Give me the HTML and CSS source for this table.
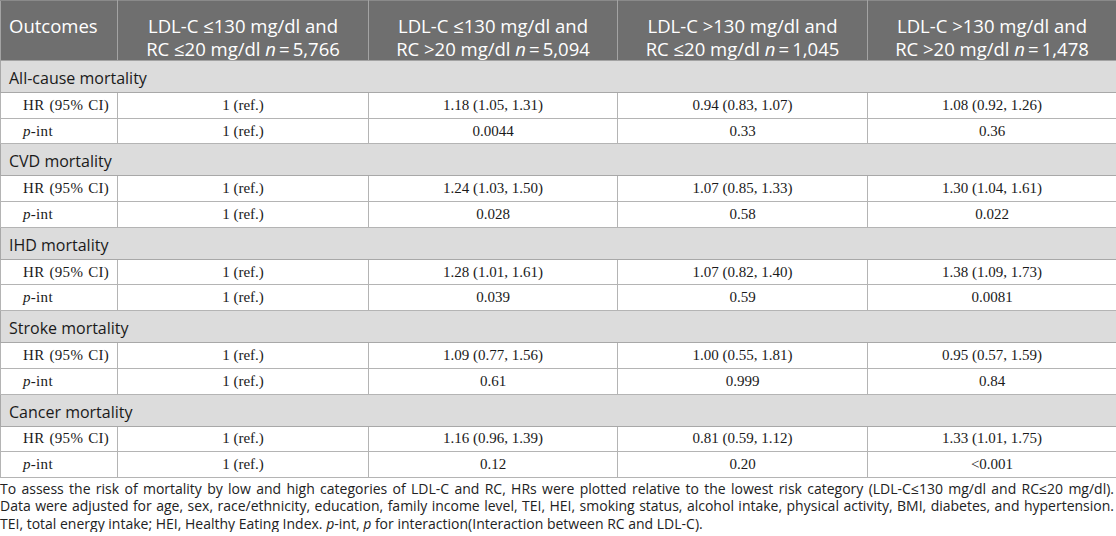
FILE: index.html
```html
<!DOCTYPE html>
<html>
<head>
<meta charset="utf-8">
<link rel="stylesheet" href="styles.css">
</head>
<body>
<div class="wrap">
<table class="tbl">
  <colgroup>
    <col class="c0"><col class="c1"><col class="c2"><col class="c3"><col class="c4">
  </colgroup>
  <thead>
    <tr>
      <th class="first">Outcomes</th>
      <th>LDL-C ≤130 mg/dl and<br>RC ≤20 mg/dl <i>n</i>&thinsp;=&thinsp;5,766</th>
      <th>LDL-C ≤130 mg/dl and<br>RC &gt;20 mg/dl <i>n</i>&thinsp;=&thinsp;5,094</th>
      <th>LDL-C &gt;130 mg/dl and<br>RC ≤20 mg/dl <i>n</i>&thinsp;=&thinsp;1,045</th>
      <th>LDL-C &gt;130 mg/dl and<br>RC &gt;20 mg/dl <i>n</i>&thinsp;=&thinsp;1,478</th>
    </tr>
  </thead>
  <tbody>
    <tr class="sec"><td colspan="5">All-cause mortality</td></tr>
    <tr class="row"><td class="lbl">HR (95% CI)</td><td>1 (ref.)</td><td>1.18 (1.05, 1.31)</td><td>0.94 (0.83, 1.07)</td><td>1.08 (0.92, 1.26)</td></tr>
    <tr class="row"><td class="lbl"><i>p</i>-int</td><td>1 (ref.)</td><td>0.0044</td><td>0.33</td><td>0.36</td></tr>
    <tr class="sec"><td colspan="5">CVD mortality</td></tr>
    <tr class="row"><td class="lbl">HR (95% CI)</td><td>1 (ref.)</td><td>1.24 (1.03, 1.50)</td><td>1.07 (0.85, 1.33)</td><td>1.30 (1.04, 1.61)</td></tr>
    <tr class="row"><td class="lbl"><i>p</i>-int</td><td>1 (ref.)</td><td>0.028</td><td>0.58</td><td>0.022</td></tr>
    <tr class="sec"><td colspan="5">IHD mortality</td></tr>
    <tr class="row"><td class="lbl">HR (95% CI)</td><td>1 (ref.)</td><td>1.28 (1.01, 1.61)</td><td>1.07 (0.82, 1.40)</td><td>1.38 (1.09, 1.73)</td></tr>
    <tr class="row"><td class="lbl"><i>p</i>-int</td><td>1 (ref.)</td><td>0.039</td><td>0.59</td><td>0.0081</td></tr>
    <tr class="sec"><td colspan="5">Stroke mortality</td></tr>
    <tr class="row"><td class="lbl">HR (95% CI)</td><td>1 (ref.)</td><td>1.09 (0.77, 1.56)</td><td>1.00 (0.55, 1.81)</td><td>0.95 (0.57, 1.59)</td></tr>
    <tr class="row"><td class="lbl"><i>p</i>-int</td><td>1 (ref.)</td><td>0.61</td><td>0.999</td><td>0.84</td></tr>
    <tr class="sec"><td colspan="5">Cancer mortality</td></tr>
    <tr class="row"><td class="lbl">HR (95% CI)</td><td>1 (ref.)</td><td>1.16 (0.96, 1.39)</td><td>0.81 (0.59, 1.12)</td><td>1.33 (1.01, 1.75)</td></tr>
    <tr class="row"><td class="lbl"><i>p</i>-int</td><td>1 (ref.)</td><td>0.12</td><td>0.20</td><td>&lt;0.001</td></tr>
  </tbody>
</table>
<div class="note">
  <span class="line">To assess the risk of mortality by low and high categories of LDL-C and RC, HRs were plotted relative to the lowest risk category (LDL-C≤130 mg/dl and RC≤20 mg/dl).</span>
  <span class="line">Data were adjusted for age, sex, race/ethnicity, education, family income level, TEI, HEI, smoking status, alcohol intake, physical activity, BMI, diabetes, and hypertension.</span>
  <span class="line last">TEI, total energy intake; HEI, Healthy Eating Index. <i>p</i>-int, <i>p</i> for interaction(Interaction between RC and LDL-C).</span>
</div>
</div>
</body>
</html>
```
FILE: styles.css
```css
html, body {
  margin: 0;
  padding: 0;
  background: #ffffff;
}
.wrap {
  width: 1116px;
}
.tbl {
  width: 1116px;
  border-collapse: collapse;
  table-layout: fixed;
}
.c0 { width: 117px; }
.c1 { width: 251px; }
.c2 { width: 249px; }
.c3 { width: 250px; }
.c4 { width: 249px; }

.tbl th {
  background: #6f6f6f;
  color: #ffffff;
  font-family: "Open Sans", "Noto Sans", sans-serif;
  font-weight: normal;
  font-size: 18.5px;
  line-height: 23px;
  height: 60px;
  box-sizing: border-box;
  padding: 13px 4px 0;
  text-align: center;
  vertical-align: top;
  border: 1px solid #a3a3a3;
  border-top: 1px solid #8a8a8a;
}
.tbl th.first {
  text-align: left;
  padding-left: 8px;
}
.tbl th i {
  font-style: italic;
}
.sec td {
  background: #dcdcdc;
  color: #1a1a1a;
  font-family: "Open Sans", "Noto Sans", sans-serif;
  font-size: 16px;
  height: 32px;
  box-sizing: border-box;
  padding: 3px 8px 0;
  border: 1px solid #a8a8a8;
  vertical-align: middle;
}
.row td {
  font-family: "Liberation Serif", "Times New Roman", serif;
  font-size: 15px;
  color: #1a1a1a;
  height: 25.7px;
  box-sizing: border-box;
  padding: 0 6px;
  text-align: center;
  border: 1px solid #b4b4b4;
  vertical-align: middle;
}
.row td.lbl {
  text-align: left;
  padding-left: 22px;
  word-spacing: 1px;
  letter-spacing: 0.3px;
}
.note {
  margin: 2px 2px 0 0;
  font-family: "Open Sans", "Noto Sans", sans-serif;
  font-size: 14px;
  line-height: 17.5px;
  color: #222222;
}
.note .line {
  display: block;
  text-align: justify;
  text-align-last: justify;
}
.note .line.last {
  text-align-last: left;
}
```
